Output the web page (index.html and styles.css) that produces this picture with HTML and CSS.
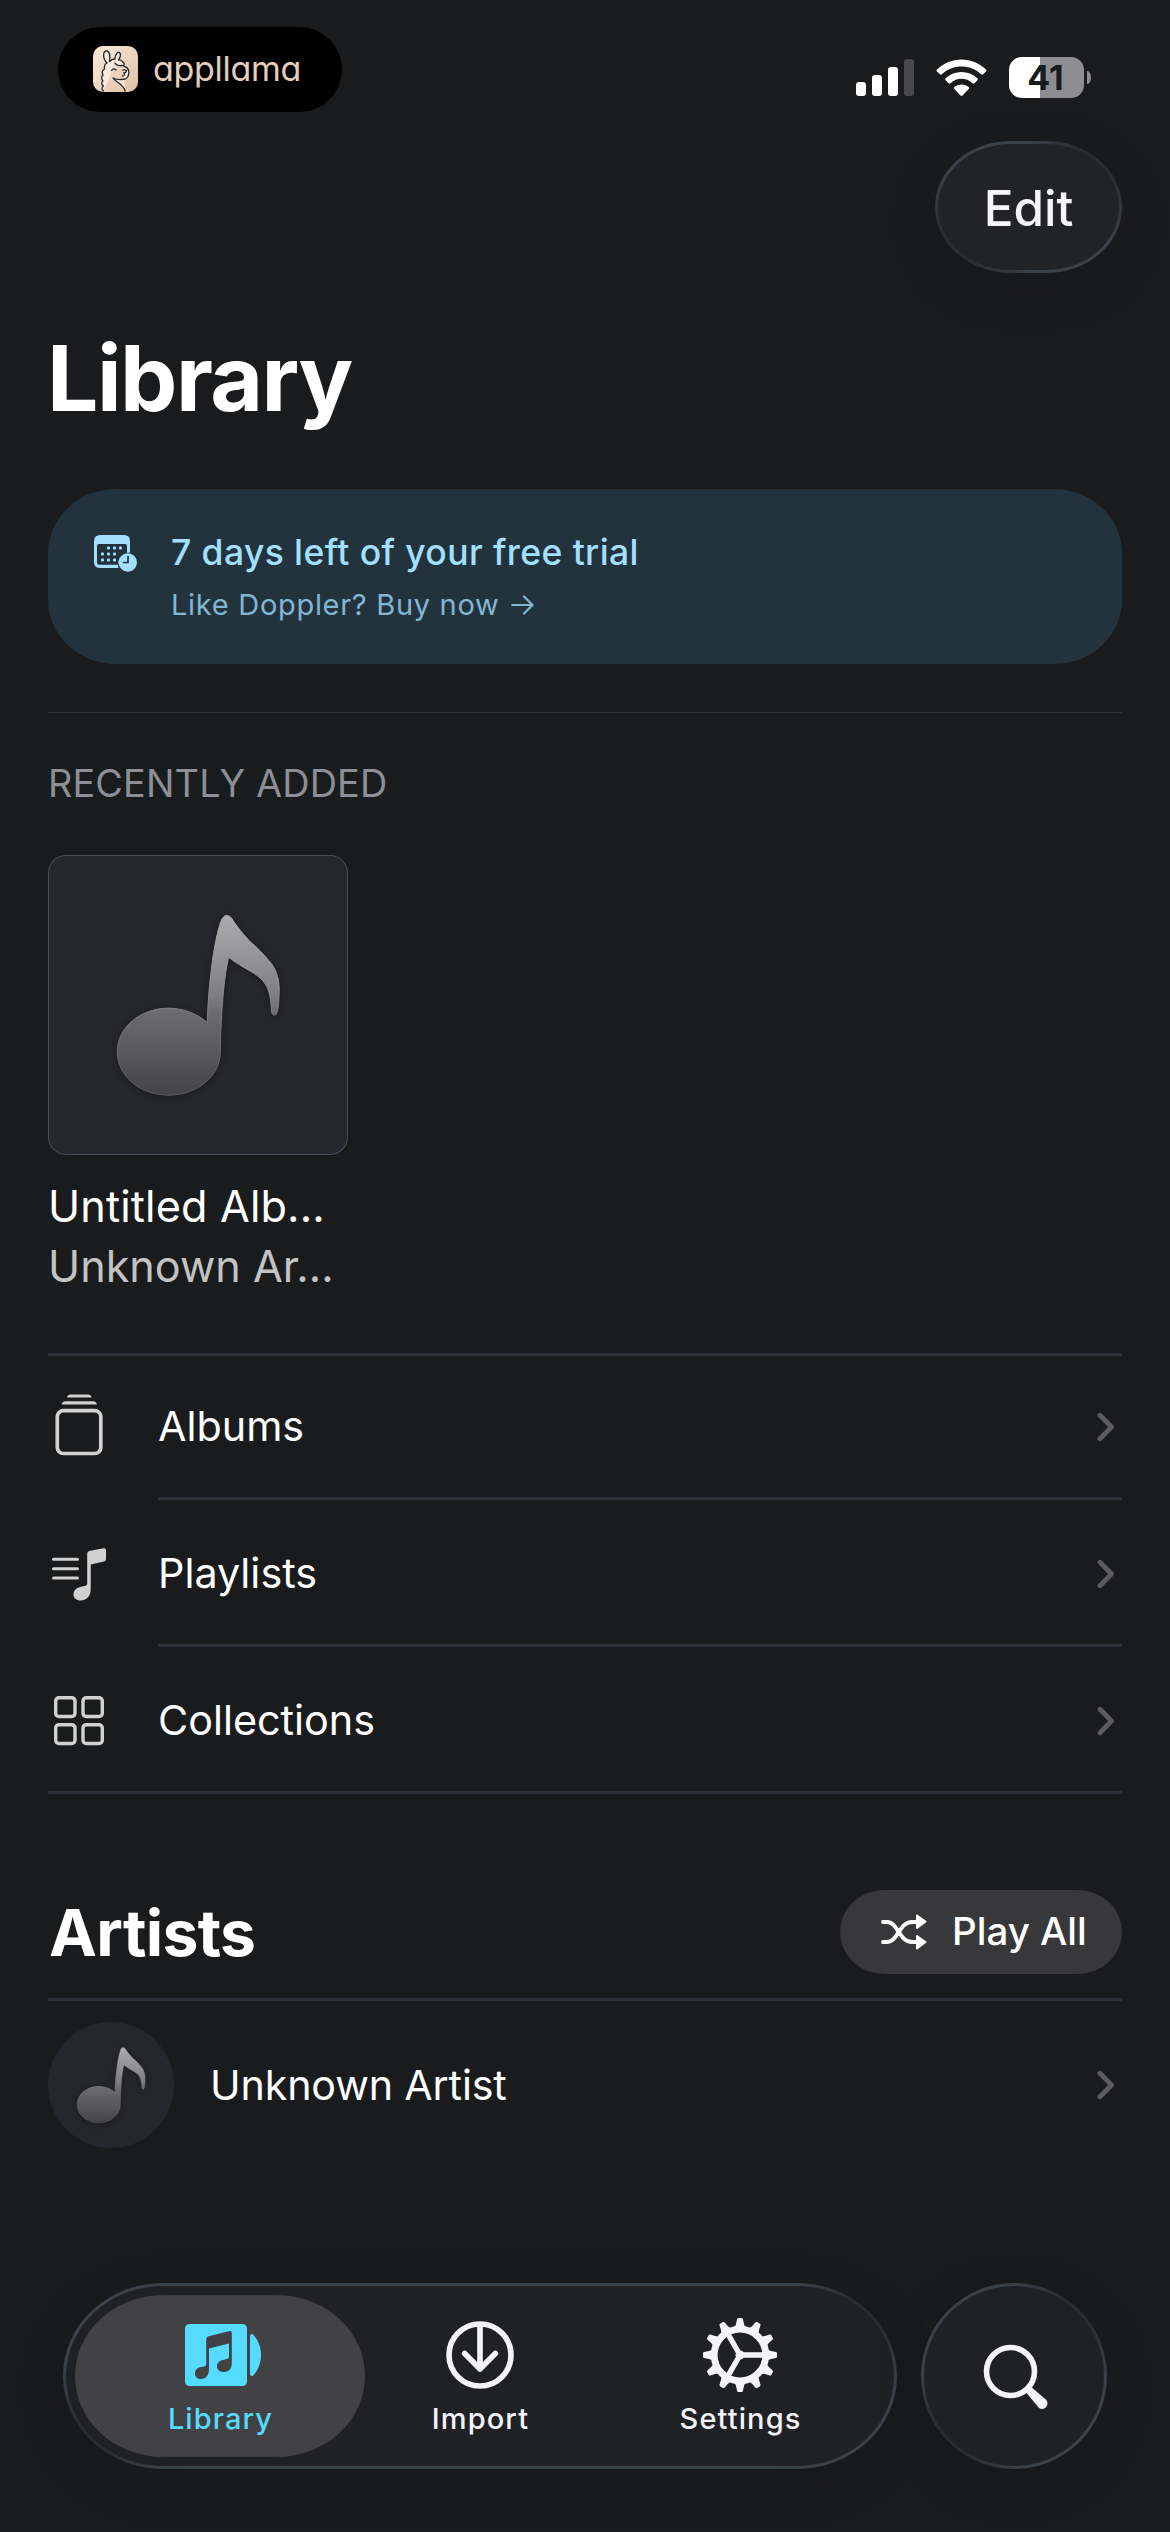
FILE: index.html
```html
<!DOCTYPE html>
<html lang="en">
<head>
<meta charset="utf-8">
<title>Library</title>
<link rel="stylesheet" href="styles.css">
</head>
<body>
<svg class="defs" width="0" height="0" aria-hidden="true">
  <defs>
    <linearGradient id="noteFill" gradientUnits="userSpaceOnUse" x1="0" y1="60" x2="0" y2="240">
      <stop offset="0" stop-color="#acacae"/>
      <stop offset="0.45" stop-color="#7e7e82"/>
      <stop offset="0.55" stop-color="#6b6b6f"/>
      <stop offset="1" stop-color="#444448"/>
    </linearGradient>
    <linearGradient id="noteEdge" gradientUnits="userSpaceOnUse" x1="0" y1="60" x2="0" y2="240">
      <stop offset="0" stop-color="#b0b0b2"/>
      <stop offset="1" stop-color="#5c5c5f"/>
    </linearGradient>
    <symbol id="note" viewBox="0 0 300 300">
      <path fill="url(#noteFill)" stroke="url(#noteEdge)" stroke-width="1" d="M159.300 167.600C160 137 165 88 173 66.300C176 58 182 59 185.500 66.300C190 73 196 80 202 86.600C210 93 216 100 220.300 105C230 115 232 128 231 141C230.500 151 230 160 226.300 160C223 160 223.500 154 223 149C222 137 219 129 212 122.900C206 117 192 111.500 180.700 102.200C176 121 174 150 172.600 180L172.300 197C172.300 221 149 240.200 120.800 240.200C92 240.200 69.300 221 69.300 196.700C69.300 172.500 92 153.200 120.800 153.200C135 153.200 149 158.500 159.300 167.600Z"/>
    </symbol>
    <symbol id="chevron" viewBox="0 0 18 30">
      <path d="M3 3.200L14.500 15L3 26.800" fill="none" stroke="#5b5b60" stroke-width="4.800" stroke-linecap="round" stroke-linejoin="round"/>
    </symbol>
    <path id="tooth" d="M-5.600 -27L-4 -31L-2.900 -36Q-2.600 -37 -1.700 -37H1.700Q2.600 -37 2.900 -36L4 -31L5.600 -27Z"/>
  </defs>
</svg>

<header class="status-bar">
  <div class="brand">
    <svg class="brand-icon" viewBox="0 0 45 46">
      <defs><linearGradient id="cream" x1="0" y1="0" x2="1" y2="1"><stop offset="0" stop-color="#fbeadb"/><stop offset="1" stop-color="#dfc0a5"/></linearGradient></defs>
      <rect width="45" height="46" rx="10" fill="url(#cream)"/>
      <path d="M10.500 45C8 43 9 41 10.500 40C8 38 8.500 36 10 35C8 33 8.500 30 10 29C8.500 26 9.500 24 11.500 23C11 20 12 18 14 17C9 12 10 4 14 5C17.500 6 17 12 16.500 15.500C18 13.500 20 13 22 13C22 9 24 6 26.500 6.500C28.500 8 27 12 25.500 14C29 13 29 16 30.500 16.500C32 18 31 20 29 19.500C26 20 23 19 22 17M30.500 20C34 21 36 24 35.800 27C35.500 31.500 33 33.500 29 33.500C25 34 22 33 20 32C22 36 31 38 32 45" fill="#fbeadb" stroke="#22282e" stroke-width="1.350" stroke-linecap="round" stroke-linejoin="round"/>
      <path d="M18.500 24.500Q20.500 21.500 23 24M30 24Q32.500 23.500 33.500 24.500Q33 27 31 27Q32.500 29.500 29.500 30" fill="none" stroke="#22282e" stroke-width="1.300" stroke-linecap="round"/>
    </svg>
    <span class="brand-name">appllama</span>
  </div>
  <div class="indicators">
    <svg width="58" height="38" viewBox="0 0 58 38">
      <g fill="#fff"><rect y="23" width="10" height="14" rx="3"/><rect x="16" y="16" width="10" height="21" rx="3"/><rect x="32" y="8" width="10" height="29" rx="3"/></g>
      <rect x="48" width="10" height="37" rx="3" fill="#48484a"/>
    </svg>
    <svg class="wifi" width="51" height="38" viewBox="0 0 51 38">
      <g fill="#fff">
        <path d="M1 10.500C14.500 -3 36.500 -3 50 10.500Q51 11.500 50 12.500L47.200 15.300Q46.200 16.200 45.200 15.300C34 5 17 5 5.800 15.300Q4.800 16.200 3.800 15.300L1 12.500Q0 11.500 1 10.500Z"/>
        <path d="M9.600 19.300C18.500 10.900 32.500 10.900 41.400 19.300Q42.400 20.300 41.400 21.300L38.500 24.200Q37.500 25 36.500 24.200C30.200 18.400 20.800 18.400 14.500 24.200Q13.500 25 12.500 24.200L9.600 21.300Q8.600 20.300 9.600 19.300Z"/>
        <path d="M18.300 28C22.400 24.500 28.600 24.500 32.700 28Q33.700 29 32.700 30L26.500 36.600Q25.500 37.500 24.500 36.600L18.300 30Q17.300 29 18.300 28Z"/>
      </g>
    </svg>
    <div class="battery">
      <div class="battery-body">41</div>
      <div class="battery-cap"></div>
    </div>
  </div>
</header>

<main class="content">
  <div class="toolbar"><button class="edit glass">Edit</button></div>
  <h1 class="title">Library</h1>

  <section class="trial">
    <svg class="trial-icon" width="44" height="38" viewBox="0 0 44 38">
      <path fill="#a3e0ff" fill-rule="evenodd" d="M6.500 0H30Q36 0 36 6V17.500C29 17.500 24 22.500 24 29.500Q24 31 24.500 33H6.500Q0 33 0 27V6Q0 0 6.500 0ZM5 9Q3 9 3 11V27.500Q3 29.700 5 29.700H24.200C24.800 23 28 19 33 18V11Q33 9 31 9Z"/>
      <g fill="#a3e0ff"><rect x="13" y="11.500" width="3" height="3" rx="1"/><rect x="19" y="11.500" width="3" height="3" rx="1"/><rect x="25" y="11.500" width="3" height="3" rx="1"/><rect x="7" y="17.500" width="3" height="3" rx="1"/><rect x="13" y="17.500" width="3" height="3" rx="1"/><rect x="19" y="17.500" width="3" height="3" rx="1"/><rect x="7" y="23.500" width="3" height="3" rx="1"/><rect x="13" y="23.500" width="3" height="3" rx="1"/><rect x="19" y="23.500" width="3" height="3" rx="1"/></g>
      <circle cx="33.800" cy="27.500" r="9.200" fill="#a3e0ff"/>
      <path d="M34 21.500V27.500H29.500" fill="none" stroke="#22333e" stroke-width="1.700" stroke-linecap="round"/>
    </svg>
    <div class="trial-text">
      <div class="trial-title">7 days left of your free trial</div>
      <div class="trial-link"><span>Like Doppler? Buy now</span>
        <svg width="23" height="22" viewBox="0 0 23 22"><path d="M1.200 11H21M13 2.500L21.500 11L13 19.500" fill="none" stroke="#82b6d2" stroke-width="2.200" stroke-linecap="round" stroke-linejoin="round"/></svg>
      </div>
    </div>
  </section>

  <section class="recent">
    <h2 class="recent-title">RECENTLY ADDED</h2>
    <div class="album">
      <div class="cover"><svg class="note" viewBox="0 0 300 300"><use href="#note"/></svg></div>
      <div class="album-name">Untitled Alb...</div>
      <div class="album-artist">Unknown Ar...</div>
    </div>
  </section>

  <nav class="list">
    <div class="row">
      <svg class="row-icon" width="60" height="72" viewBox="48 1391.500 60 72">
        <path fill="#d1d1d1" d="M67 1397Q67.500 1394 70.500 1394H88Q91 1394 91.500 1397ZM61.500 1404Q62.500 1400.700 65.500 1400.700H93Q96 1400.700 97 1404Z"/>
        <rect x="57.300" y="1410.200" width="43.500" height="42.800" rx="6" fill="none" stroke="#d1d1d1" stroke-width="3.700"/>
      </svg>
      <div class="row-body"><span class="row-label">Albums</span><svg class="chevron" width="18" height="30"><use href="#chevron"/></svg></div>
    </div>
    <div class="row">
      <svg class="row-icon" width="60" height="64" viewBox="48 1541.500 60 64">
        <path d="M53.500 1558.700H77.500M53.500 1568.200H77.500M53.500 1577.600H77.500" stroke="#d1d1d1" stroke-width="3" stroke-linecap="round"/>
        <path fill="#d1d1d1" d="M87.200 1553Q87.200 1551 89.200 1550.500L103.500 1547.700Q106 1547.300 106 1549.700V1558.500Q106 1560.500 104 1561L90.700 1564V1589C90.700 1596 86 1600 80.500 1600C76.500 1600 73.500 1597.500 73.500 1594C73.500 1590 76.500 1587 81 1586.200L85.500 1585.300Q87.200 1585 87.200 1583Z"/>
      </svg>
      <div class="row-body"><span class="row-label">Playlists</span><svg class="chevron" width="18" height="30"><use href="#chevron"/></svg></div>
    </div>
    <div class="row last">
      <svg class="row-icon" width="60" height="64" viewBox="48 1687 60 64">
        <g fill="none" stroke="#d1d1d1" stroke-width="3.400"><rect x="55.700" y="1697.700" width="19.300" height="18.800" rx="3.200"/><rect x="83" y="1697.700" width="19.300" height="18.800" rx="3.200"/><rect x="55.700" y="1724.700" width="19.300" height="18.800" rx="3.200"/><rect x="83" y="1724.700" width="19.300" height="18.800" rx="3.200"/></g>
      </svg>
      <div class="row-body"><span class="row-label">Collections</span><svg class="chevron" width="18" height="30"><use href="#chevron"/></svg></div>
    </div>
  </nav>

  <section class="artists">
    <div class="artists-head">
      <h2 class="artists-title">Artists</h2>
      <button class="play-all">
        <svg width="46" height="36" viewBox="0 0 46 36">
          <path d="M2 8H6C17 8 18 28 31 28H36M2 28H6C17 28 18 8 31 8H36" fill="none" stroke="#fff" stroke-width="4" stroke-linecap="round"/>
          <path d="M36 1.500L44.500 7.500L36 14Z M36 22L44.500 28L36 34.500Z" fill="#fff" stroke="#fff" stroke-width="2" stroke-linejoin="round"/>
        </svg>
        <span>Play All</span>
      </button>
    </div>
    <div class="artist">
      <div class="avatar"><svg class="note" viewBox="0 0 300 300"><use href="#note"/></svg></div>
      <span class="artist-name">Unknown Artist</span>
      <svg class="chevron" width="18" height="30"><use href="#chevron"/></svg>
    </div>
  </section>
</main>

<footer class="dock">
  <nav class="tabs glass">
    <div class="tab active">
      <svg width="76" height="68" viewBox="0 0 76 68">
        <path fill="#54dbff" d="M5 3H57Q62 3 62 8V60Q62 65 57 65H5Q0 65 0 60V8Q0 3 5 3Z"/>
        <path fill="#54dbff" d="M65 15Q65 12.500 67.500 13C73 18 76 26 76 34C76 42 73 50 67.500 55Q65 55.500 65 53Z"/>
        <path fill="#424245" fill-rule="evenodd" d="M21.200 18.500Q21.200 16 23.500 15.300L44 10.200Q46.800 9.600 46.800 12.300V42C46.800 48 43.500 51 39 51C35 51 32 49 32 45.500C32 41.500 35 39 39 38.700C42 38.300 44 37.800 44 35.500V22.500L24 27.500V48C24 54 21 58 16 58C12.500 58 10 56 10 52.500C10 49 12.500 46.500 16 46C19 45.700 21.200 45.300 21.200 43Z"/>
      </svg>
      <span>Library</span>
    </div>
    <div class="tab">
      <svg width="68" height="68" viewBox="0 0 68 68">
        <circle cx="34" cy="34" r="31" fill="none" stroke="#f3f3f9" stroke-width="5.600"/>
        <path d="M34 4V48M18.700 32.500L34 48L49.300 32.500" fill="none" stroke="#f3f3f9" stroke-width="5.600" stroke-linecap="round" stroke-linejoin="round"/>
      </svg>
      <span>Import</span>
    </div>
    <div class="tab settings">
      <svg width="76" height="76" viewBox="-38 -38 76 76">
        <circle r="25.800" fill="none" stroke="#f3f3f9" stroke-width="6.800"/>
        <g fill="#f3f3f9"><use href="#tooth"/><use href="#tooth" transform="rotate(30)"/><use href="#tooth" transform="rotate(60)"/><use href="#tooth" transform="rotate(90)"/><use href="#tooth" transform="rotate(120)"/><use href="#tooth" transform="rotate(150)"/><use href="#tooth" transform="rotate(180)"/><use href="#tooth" transform="rotate(210)"/><use href="#tooth" transform="rotate(240)"/><use href="#tooth" transform="rotate(270)"/><use href="#tooth" transform="rotate(300)"/><use href="#tooth" transform="rotate(330)"/></g>
        <path d="M0 0H24M0 0L-12 -20.800M0 0L-12 20.800" stroke="#f3f3f9" stroke-width="5.400"/>
        <circle r="4.500" fill="#f3f3f9"/>
      </svg>
      <span>Settings</span>
    </div>
  </nav>
  <button class="search glass" aria-label="Search">
    <svg width="66" height="66" viewBox="0 0 66 66">
      <circle cx="27.500" cy="27.500" r="24" fill="none" stroke="#f3f3f9" stroke-width="5.600"/>
      <path fill="#f3f3f9" d="M41.500 46.500L46.500 41.500L62.500 55.200C67.500 60 62 67.500 56 64Z"/>
    </svg>
  </button>
</footer>
</body>
</html>
```
FILE: styles.css
```css
* { box-sizing: border-box; }

body {
  margin: 0;
  width: 1170px;
  height: 2532px;
  overflow: hidden;
  display: flex;
  flex-direction: column;
  background: #1a1b1c;
  color: #fff;
  font-family: Inter, "Liberation Sans", sans-serif;
}

svg { display: block; flex: none; }
.defs { position: absolute; }

h1, h2 { margin: 0; }

button {
  border: 0;
  padding: 0;
  color: inherit;
  font: inherit;
  display: flex;
  align-items: center;
}

.glass {
  --fill: #222327;
  border: 3px solid transparent;
  background:
    linear-gradient(var(--fill), var(--fill)) padding-box,
    radial-gradient(circle at calc(100% - 28px) 28px, #2b2c30 20px, transparent 75px) border-box,
    radial-gradient(circle at 28px calc(100% - 28px), #2b2c30 20px, transparent 75px) border-box,
    linear-gradient(#3b4149, #3b4149) border-box;
  box-shadow: 0 14px 40px rgba(20, 22, 36, 0.35);
}

/* Status bar */
.status-bar {
  height: 141px;
  flex: none;
  padding: 27px 79px 0 58px;
  display: flex;
  justify-content: space-between;
  align-items: flex-start;
}

.brand {
  width: 284px;
  height: 85px;
  padding: 0 0 2px 35px;
  border-radius: 43px;
  background: #000;
  display: flex;
  align-items: center;
  gap: 15px;
}

.brand-icon { width: 45px; height: 46px; }

.brand-name {
  color: #e3cdbb;
  font-size: 34px;
  font-weight: 400;
  line-height: 46px;
  letter-spacing: -0.3px;
  font-feature-settings: "cv11";
}

.indicators {
  height: 41px;
  margin-top: 30px;
  display: flex;
  align-items: center;
}

.wifi { margin-left: 22px; }

.battery {
  margin-left: 22px;
  display: flex;
  align-items: center;
  gap: 3px;
}

.battery-body {
  width: 75px;
  height: 41px;
  padding-right: 2px;
  border-radius: 13px;
  background: linear-gradient(90deg, #fff 31px, #8e8e90 31px);
  color: #1a1b1c;
  font-size: 34px;
  font-weight: 700;
  line-height: 42px;
  text-align: center;
}

.battery-cap {
  width: 4px;
  height: 13px;
  border-radius: 0 4px 4px 0 / 0 7px 7px 0;
  background: #8e8e90;
}

/* Page content */
.content { padding: 0 48px; }

.toolbar { display: flex; justify-content: flex-end; }

.edit {
  width: 187px;
  height: 132px;
  padding-top: 1px;
  border-radius: 76px / 66px;
  justify-content: center;
  color: #f3f3f9;
  font-size: 49.4px;
  font-weight: 500;
}

.title {
  margin: 50px 0 56px -1px;
  font-size: 91px;
  font-weight: 700;
  line-height: 110px;
  letter-spacing: -1.5px;
}

.trial {
  height: 175px;
  padding: 42px 46px 0;
  border-radius: 68px / 64px;
  background: #22333e;
  display: flex;
  gap: 33px;
}

.trial-icon { margin-top: 4px; }

.trial-title {
  color: #a3e0ff;
  font-size: 35.5px;
  font-weight: 500;
  line-height: 44px;
  letter-spacing: 0.4px;
}

.trial-link {
  margin-top: 8px;
  display: flex;
  align-items: center;
  gap: 12px;
  color: #82b6d2;
  font-size: 29px;
  line-height: 44px;
  letter-spacing: 0.7px;
}

.recent {
  margin-top: 48px;
  padding-top: 47px;
  border-top: 1px solid #2f3038;
}

.recent-title {
  color: #8e8e96;
  font-size: 37.8px;
  font-weight: 400;
  line-height: 46px;
  letter-spacing: 0.15px;
}

.album { width: 300px; margin-top: 49px; white-space: nowrap; }

.cover {
  width: 300px;
  height: 300px;
  border-radius: 18px;
  background: #26272c;
  box-shadow: inset 0 0 0 1px #4a4a50;
}

.note {
  width: 100%;
  height: 100%;
  filter: drop-shadow(0 1px 3px rgba(0, 0, 0, 0.35));
}

.album-name, .album-artist { font-size: 43.2px; line-height: 60px; }
.album-name { margin-top: 21px; letter-spacing: 0.15px; }
.album-artist { color: #c3c3c3; }

.list { margin-top: 57px; border-top: 3px solid #303138; }

.row {
  height: 147px;
  display: flex;
  align-items: center;
}

.row:first-child { height: 144px; }
.row.last { border-bottom: 3px solid #303138; }
.row-icon { margin-right: 50px; }

.row-body {
  flex: 1;
  align-self: stretch;
  display: flex;
  align-items: center;
  justify-content: space-between;
  padding: 3px 7px 0 0;
  border-bottom: 3px solid #303138;
  font-size: 41.3px;
}

.row-label { margin-bottom: 1px; }
.row:first-child .row-body { padding-top: 0; }
.row.last .row-body { border-bottom: 0; }

.artists-head {
  height: 207px;
  display: flex;
  justify-content: space-between;
  align-items: flex-end;
  padding-bottom: 24px;
  border-bottom: 3px solid #303138;
}

.artists-title {
  margin-left: 1px;
  font-size: 64.2px;
  font-weight: 700;
  line-height: 83px;
  letter-spacing: -0.7px;
}

.play-all {
  width: 282px;
  height: 84px;
  padding-left: 41px;
  border-radius: 44px / 42px;
  background: #38383a;
  gap: 25px;
  font-size: 38.5px;
  font-weight: 500;
}

.play-all span { margin-bottom: 2px; }

.artist {
  padding: 21px 7px 0 0;
  display: flex;
  align-items: center;
}

.avatar {
  width: 126px;
  height: 126px;
  border-radius: 50%;
  background: #26272c;
}

.artist-name {
  flex: 1;
  margin-left: 36px;
  font-size: 41.2px;
  letter-spacing: -0.15px;
}

/* Bottom navigation */
.dock {
  margin: auto 63px 63px;
  display: flex;
  justify-content: space-between;
}

.tabs, .search { --fill: #202125; }

.tabs {
  width: 834px;
  height: 186px;
  padding: 9px;
  border-radius: 100px / 93px;
  display: flex;
}

.tab {
  width: 290px;
  height: 162px;
  padding-top: 26px;
  border-radius: 88px / 81px;
  display: flex;
  flex-direction: column;
  align-items: center;
  color: #f3f3f9;
  font-size: 29px;
  font-weight: 550;
  line-height: 36px;
  letter-spacing: 1.1px;
}

.tab + .tab { margin-left: -30px; }
.tab span { margin: 12px 0 0 1px; }
.tab.active { background: #424245; color: #54dbff; }
.tab.active svg { margin-left: 6px; }
.tab.settings { padding-top: 22px; }
.tab.settings span { margin-top: 8px; }

.search {
  width: 186px;
  height: 186px;
  padding: 2px 0 0 3px;
  border-radius: 50%;
  justify-content: center;
}
```
